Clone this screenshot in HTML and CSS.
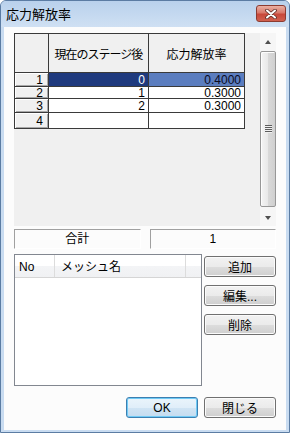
FILE: index.html
```html
<!DOCTYPE html>
<html lang="ja">
<head>
    <meta charset="UTF-8">
    <title>応力解放率</title>
    <link rel="stylesheet" href="styles.css">
</head>
<body>
    <div class="window">
        <div class="titlebar">
            <span class="title">応力解放率</span>
            <div class="close">
                <svg width="14" height="10" viewBox="0 0 14 10">
                    <path d="M3 1.5 L11 8.5 M11 1.5 L3 8.5" stroke="#5a2a24" stroke-width="3.6" stroke-linecap="round"/>
                    <path d="M3 1.5 L11 8.5 M11 1.5 L3 8.5" stroke="#ffffff" stroke-width="2" stroke-linecap="round"/>
                </svg>
            </div>
        </div>
        <div class="client">
            <div class="grid-area">
                <div class="grid">
                    <div class="hcell corner"></div>
                    <div class="hcell narrow">現在のステージ後</div>
                    <div class="hcell">応力解放率</div>

                    <div class="rhead">1</div>
                    <div class="cell sel-dark">0</div>
                    <div class="cell sel-light">0.4000</div>

                    <div class="rhead">2</div>
                    <div class="cell">1</div>
                    <div class="cell">0.3000</div>

                    <div class="rhead">3</div>
                    <div class="cell">2</div>
                    <div class="cell">0.3000</div>

                    <div class="rhead">4</div>
                    <div class="cell"></div>
                    <div class="cell"></div>
                </div>
                <div class="vscroll">
                    <div class="arrow up"></div>
                    <div class="thumb"><span class="grip"></span></div>
                    <div class="arrow down"></div>
                </div>
            </div>

            <div class="totals">
                <div class="total-box">合計</div>
                <div class="total-box">1</div>
            </div>

            <div class="mesh">
                <div class="listview">
                    <div class="lv-head">
                        <span class="col-no">No</span>
                        <span class="col-name">メッシュ名</span>
                        <span class="col-rest"></span>
                    </div>
                </div>
                <div class="side-buttons">
                    <button class="btn">追加</button>
                    <button class="btn">編集...</button>
                    <button class="btn">削除</button>
                </div>
            </div>

            <div class="footer">
                <button class="btn default">OK</button>
                <button class="btn">閉じる</button>
            </div>
        </div>
    </div>
</body>
</html>
```

FILE: styles.css
```css
body {
    margin: 0;
    font-family: "Liberation Sans", "Noto Sans CJK JP", sans-serif;
    font-size: 12px;
    color: #000;
    background: #ffffff;
}
.window {
    width: 290px;
    height: 433px;
    box-sizing: border-box;
    border: 1px solid #5b7ca3;
    border-radius: 6px 6px 0 0;
    background: #c9dcf1;
    display: flex;
    flex-direction: column;
}
.titlebar {
    height: 26px;
    display: flex;
    align-items: flex-start;
    padding-left: 5px;
    background: linear-gradient(#b9d1ec, #cfe0f3);
    border-radius: 5px 5px 0 0;
}
.title {
    font-family: "Noto Sans CJK JP", sans-serif;
    font-size: 13px;
    line-height: 26px;
}
.close {
    margin-left: auto;
    margin-right: 3px;
    margin-top: 4px;
    width: 30px;
    height: 17px;
    box-sizing: border-box;
    border: 1px solid #8c3b31;
    border-radius: 3px;
    background: linear-gradient(#eab1a4, #d9786a 45%, #c8483a 55%, #d0604f);
    display: flex;
    align-items: center;
    justify-content: center;
}
.client {
    flex: 1;
    margin: 0 3px 2px 3px;
    background: #fcfcfc;
    padding: 6px 10px 0;
    display: flex;
    flex-direction: column;
}

/* data grid */
.grid-area {
    height: 193px;
    background: #f0f0f0;
    display: flex;
    justify-content: space-between;
}
.grid {
    align-self: flex-start;
    display: grid;
    grid-template-columns: 34px 100px 96px;
    grid-template-rows: 39px 14px 12px 14px 16px;
    border-left: 1px solid #3a3a3a;
    border-top: 1px solid #3a3a3a;
}
.hcell, .rhead, .cell {
    border-right: 1px solid #3a3a3a;
    border-bottom: 1px solid #3a3a3a;
    display: flex;
    align-items: center;
}
.hcell {
    justify-content: center;
    background: #f0f0f0;
    font-family: "Noto Sans CJK JP", sans-serif;
}
.hcell.narrow {
    letter-spacing: -1px;
}
.rhead {
    justify-content: flex-end;
    padding-right: 5px;
    background: #f0f0f0;
    box-shadow: inset 1px 1px #ffffff, inset -1px -1px #a8a8a8;
}
.cell {
    justify-content: flex-end;
    padding-right: 3px;
    background: #ffffff;
}
.sel-dark {
    background: #1f3a7e;
    color: #ffffff;
}
.sel-light {
    background: #5b7dbf;
    color: #0a0a1e;
}
.vscroll {
    width: 16px;
    display: flex;
    flex-direction: column;
    background: #f6f6f6;
}
.arrow {
    height: 17px;
    display: flex;
    align-items: center;
    justify-content: center;
}
.arrow::before {
    content: "";
    border-left: 3.5px solid transparent;
    border-right: 3.5px solid transparent;
}
.arrow.up::before {
    border-bottom: 4px solid #505050;
}
.arrow.down::before {
    border-top: 4px solid #505050;
}
.thumb {
    flex: 1;
    margin: 1px 0 2px;
    border: 1px solid #979797;
    border-radius: 2px;
    background: linear-gradient(to right, #f4f4f4, #e8e8e8 50%, #d9d9d9 51%, #cfcfcf);
    box-shadow: inset 1px 1px #fdfdfd;
    display: flex;
    align-items: center;
    justify-content: center;
}
.grip {
    width: 7px;
    height: 8px;
    background: repeating-linear-gradient(#5c5c5c 0 1px, #f0f0f0 1px 2px);
}

/* totals */
.totals {
    margin-top: 3px;
    display: flex;
    gap: 9px;
}
.total-box {
    flex: 1;
    height: 20px;
    box-sizing: border-box;
    border-top: 1px solid #a0a0a0;
    border-left: 1px solid #a0a0a0;
    border-right: 1px solid #ffffff;
    border-bottom: 1px solid #ffffff;
    text-align: center;
    line-height: 18px;
}

/* mesh list */
.mesh {
    margin-top: 5px;
    display: flex;
    gap: 2px;
}
.listview {
    width: 188px;
    height: 132px;
    box-sizing: border-box;
    border: 1px solid #828790;
    background: #ffffff;
}
.lv-head {
    height: 23px;
    box-sizing: border-box;
    display: flex;
    border-bottom: 1px solid #d5d5d5;
    background: linear-gradient(#ffffff, #ffffff 50%, #f3f4f6 51%, #f0f1f3);
}
.lv-head span {
    box-sizing: border-box;
    border-right: 1px solid #dcdcdc;
    line-height: 24px;
    padding-left: 4px;
}
.col-no {
    width: 40px;
}
.col-name {
    width: 131px;
    padding-left: 6px !important;
}
.col-rest {
    flex: 1;
    border-right: none !important;
}
.side-buttons {
    padding-top: 2px;
    display: flex;
    flex-direction: column;
    gap: 8px;
}
.btn {
    width: 72px;
    height: 21px;
    padding: 0;
    font-family: "Liberation Sans", "Noto Sans CJK JP", sans-serif;
    font-size: 12px;
    color: #000;
    border: 1px solid #707070;
    border-radius: 3px;
    background: linear-gradient(#f2f2f2, #ebebeb 50%, #dddddd 51%, #cfcfcf);
    box-shadow: inset 0 0 0 1px #fbfbfb;
}
.btn.default {
    border-color: #3c7fb1;
    background: linear-gradient(#eaf4fb, #e0eef9 50%, #d0e4f4 51%, #c4dcf0);
    box-shadow: inset 0 0 0 1px #6fcaf5;
}

/* footer */
.footer {
    margin-top: 11px;
    display: flex;
    justify-content: flex-end;
    gap: 6px;
}
```
